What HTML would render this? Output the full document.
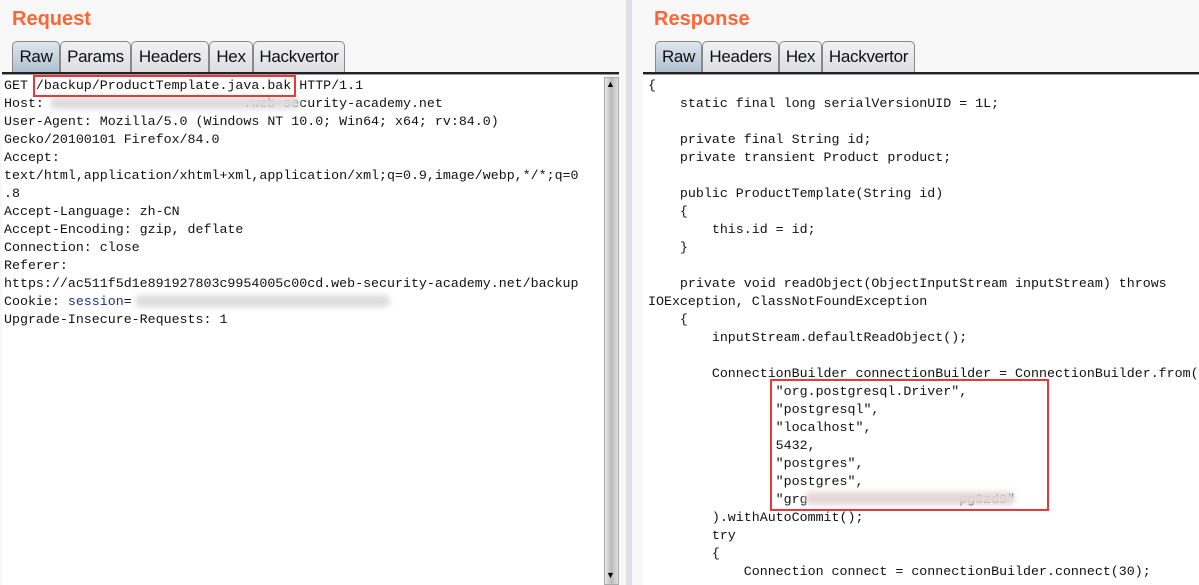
<!DOCTYPE html>
<html><head><meta charset="utf-8"><style>
*{margin:0;padding:0;box-sizing:border-box}
body{width:1199px;height:585px;background:#f8f8f8;position:relative;overflow:hidden;font-family:"Liberation Sans",sans-serif}
.title{position:absolute;top:8px;color:#ff6633;font-weight:bold;font-size:20px}
.tab{position:absolute;top:41px;height:32px;border:1px solid #888;border-bottom:none;border-radius:5px 5px 0 0;background:linear-gradient(#f2f2f2,#dcdde0);font-size:17px;color:#111;text-align:center;line-height:30px;letter-spacing:-0.3px}
.tab.sel{background:linear-gradient(#dfe6ee,#aebfd0)}
.line{position:absolute;top:72px;height:3px;border-top:2px solid #222;border-bottom:1px solid #999}
.pane{position:absolute;top:75px;bottom:0;background:#fff}
pre{font-family:"Liberation Mono",monospace;font-size:13.3px;line-height:18px;color:#111;position:absolute;white-space:pre}
.blur{position:absolute;background:#dcdcdc;filter:blur(3px);border-radius:6px}
.box{position:absolute;border:2px solid #e8383b}
</style></head><body>
<div class="title" style="left:12px">Request</div>
<div class="title" style="left:654px">Response</div>
<div class="tab sel" style="left:12px;width:48px">Raw</div>
<div class="tab" style="left:60px;width:71px">Params</div>
<div class="tab" style="left:131px;width:78px">Headers</div>
<div class="tab" style="left:209px;width:44px">Hex</div>
<div class="tab" style="left:253px;width:92px">Hackvertor</div>
<div class="tab sel" style="left:655px;width:47px">Raw</div>
<div class="tab" style="left:702px;width:77px">Headers</div>
<div class="tab" style="left:779px;width:43px">Hex</div>
<div class="tab" style="left:822px;width:93px">Hackvertor</div>
<div class="line" style="left:2px;width:617px"></div>
<div class="line" style="left:643px;width:556px"></div>
<div class="pane" style="left:2px;width:602px"></div>
<div style="position:absolute;left:604px;top:77px;width:15px;bottom:0;background:linear-gradient(90deg,#e8e8e8,#bbb,#e0e0e0);border:1px solid #aaa"></div>
<div style="position:absolute;left:606px;top:79px;font-size:9px">▲</div>
<div style="position:absolute;left:606px;top:570px;font-size:9px">▼</div>
<div style="position:absolute;left:626px;top:0;width:6px;bottom:0;background:#dde0e6"></div>
<div class="pane" style="left:643px;right:0"></div>
<pre style="left:4px;top:77px">GET /backup/ProductTemplate.java.bak HTTP/1.1
Host:                         .web-security-academy.net
User-Agent: Mozilla/5.0 (Windows NT 10.0; Win64; x64; rv:84.0)
Gecko/20100101 Firefox/84.0
Accept:
text/html,application/xhtml+xml,application/xml;q=0.9,image/webp,*/*;q=0
.8
Accept-Language: zh-CN
Accept-Encoding: gzip, deflate
Connection: close
Referer:
https://ac511f5d1e891927803c9954005c00cd.web-security-academy.net/backup
Cookie: <span style="color:#1a2fa0">session</span>=
Upgrade-Insecure-Requests: 1</pre>
<div class="blur" style="left:50px;top:97px;width:250px;height:12px"></div>
<div class="blur" style="left:135px;top:295px;width:255px;height:12px"></div>
<div class="box" style="left:33px;top:75px;width:263px;height:22px"></div>
<pre style="left:648px;top:77px">{
    static final long serialVersionUID = 1L;

    private final String id;
    private transient Product product;

    public ProductTemplate(String id)
    {
        this.id = id;
    }

    private void readObject(ObjectInputStream inputStream) throws
IOException, ClassNotFoundException
    {
        inputStream.defaultReadObject();

        ConnectionBuilder connectionBuilder = ConnectionBuilder.from(
                "org.postgresql.Driver",
                "postgresql",
                "localhost",
                5432,
                "postgres",
                "postgres",
                "grg                   pg3zd9"
        ).withAutoCommit();
        try
        {
            Connection connect = connectionBuilder.connect(30);</pre>
<div class="blur" style="left:805px;top:492px;width:210px;height:13px;background:#e6d6d8"></div>
<div class="box" style="left:770px;top:379px;width:279px;height:132px"></div>
</body></html>
